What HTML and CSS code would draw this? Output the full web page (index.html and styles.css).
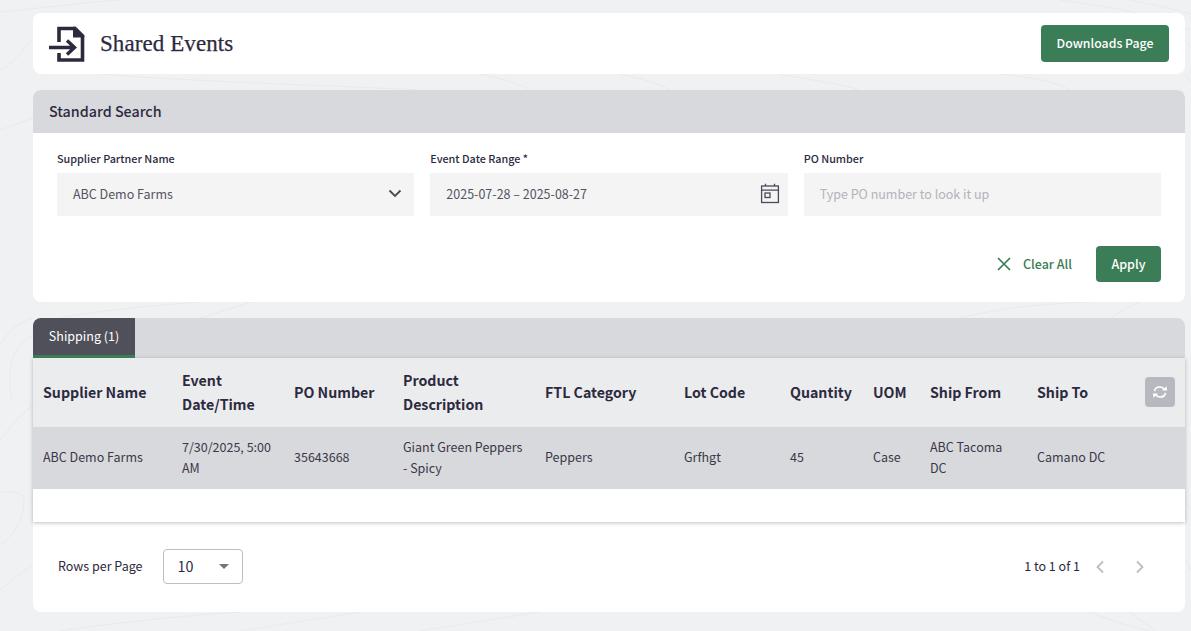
FILE: index.html
```html
<!DOCTYPE html>
<html lang="en">
<head>
<meta charset="utf-8">
<title>Shared Events</title>
<link rel="stylesheet" href="styles.css">
</head>
<body>
<svg class="contours" viewBox="0 0 1191 631" preserveAspectRatio="none" aria-hidden="true">
  <g fill="none" stroke="#e9eaed" stroke-width="1">
    <path d="M0 12C40 8 90 2 120 0M0 70C15 64 25 45 33 40M0 130C10 126 22 122 33 118"/>
    <path d="M0 345C12 325 25 320 33 318M12 400C6 370 12 345 33 335M0 440C12 425 20 415 33 405M0 545C14 535 24 520 24 500C22 490 10 492 0 492M0 590C12 580 22 572 33 565"/>
    <path d="M60 631C120 622 180 616 240 612M240 631C280 625 320 618 360 612M420 631C460 625 500 618 540 612"/>
    <path d="M1090 612C1120 625 1140 628 1150 631M1130 612C1140 620 1150 626 1155 631M1185 500C1188 505 1190 508 1191 510M1185 560C1188 565 1190 568 1191 570"/>
    <path d="M1060 0C1100 6 1140 10 1191 30M1130 0C1150 4 1170 8 1191 14M1185 40L1191 48M1185 74C1188 78 1190 80 1191 82"/>
    <path d="M100 74C200 82 300 84 420 90M480 74C500 78 520 84 530 90M620 74C640 78 660 84 670 90M780 74C800 78 840 84 860 90M1000 74C1040 78 1060 84 1070 90"/>
    <path d="M60 318C100 310 150 306 200 302M200 318C220 312 240 306 250 302M960 318C1000 308 1040 304 1090 302M1110 318C1120 312 1130 306 1140 302"/>
  </g>
</svg>
<main class="page">
  <header class="card title-card">
    <div class="title-group">
      <svg class="title-icon" viewBox="0 0 36 36" aria-hidden="true">
        <path d="M10 16V2.5H26L33.5 10V34H10V27" fill="none" stroke="#2d2a40" stroke-width="3.6"/>
        <path d="M24 .7V11.5H35.3V9.5L26.5 .7Z" fill="#2d2a40"/>
        <path d="M0 21.5H25M18 14.5L25.5 21.5L18 28.5" fill="none" stroke="#2d2a40" stroke-width="3.4"/>
      </svg>
      <h1 class="title">Shared Events</h1>
    </div>
    <button class="btn btn-downloads">Downloads Page</button>
  </header>

  <section class="card search-card">
    <h2 class="search-head">Standard Search</h2>
    <div class="fields">
      <div class="field">
        <label class="field-label">Supplier Partner Name</label>
        <div class="control">
          <span>ABC Demo Farms</span>
          <svg class="chevron" viewBox="0 0 14 9" aria-hidden="true"><path d="M1.5 1.5L7 7L12.5 1.5" fill="none" stroke="#4a4a55" stroke-width="1.8"/></svg>
        </div>
      </div>
      <div class="field">
        <label class="field-label">Event Date Range *</label>
        <div class="control">
          <span>2025-07-28 – 2025-08-27</span>
          <svg class="calendar" viewBox="0 0 20 21" aria-hidden="true">
            <g fill="none" stroke="#4a4a58" stroke-width="1.3">
              <rect x="1.6" y="3" width="16.8" height="16.5"/>
              <path d="M1.6 7.2H18.4M5.5 .8V3M14.5 .8V3"/>
              <rect x="5" y="10" width="5" height="4.5"/>
            </g>
          </svg>
        </div>
      </div>
      <div class="field">
        <label class="field-label">PO Number</label>
        <div class="control placeholder"><span>Type PO number to look it up</span></div>
      </div>
    </div>
    <div class="search-actions">
      <button class="clear-btn">
        <svg class="clear-icon" viewBox="0 0 14 14" aria-hidden="true"><path d="M1 1L13 13M13 1L1 13" fill="none" stroke="#3b7d56" stroke-width="1.7"/></svg>
        <span class="clear-text">Clear All</span>
      </button>
      <button class="btn btn-apply">Apply</button>
    </div>
  </section>

  <section class="card results-card">
    <div class="tabs"><div class="tab">Shipping (1)</div></div>
    <div class="table-wrap">
      <table class="grid">
        <thead>
          <tr>
            <th class="c-supplier">Supplier Name</th>
            <th class="c-date">Event Date/Time</th>
            <th class="c-po">PO Number</th>
            <th class="c-desc">Product Description</th>
            <th class="c-cat">FTL Category</th>
            <th class="c-lot">Lot Code</th>
            <th class="c-qty">Quantity</th>
            <th class="c-uom">UOM</th>
            <th class="c-from">Ship From</th>
            <th class="c-to">Ship To</th>
            <th class="c-act">
              <button class="refresh" aria-label="Refresh">
                <svg viewBox="0 0 16 16" aria-hidden="true">
                  <g fill="none" stroke="#fff" stroke-width="1.7">
                    <path d="M2.5 7C3 4.5 5.2 3 7.8 3C9.8 3 11.4 4 12.4 5.6"/>
                    <path d="M13.5 9C13 11.5 10.8 13 8.2 13C6.2 13 4.6 12 3.6 10.4"/>
                  </g>
                  <path d="M10 6.6L15.2 6.6L14.4 2.2Z M6 9.4L.8 9.4L1.6 13.8Z" fill="#fff"/>
                </svg>
              </button>
            </th>
          </tr>
        </thead>
        <tbody>
          <tr>
            <td>ABC Demo Farms</td>
            <td>7/30/2025, 5:00 AM</td>
            <td>35643668</td>
            <td>Giant Green Peppers - Spicy</td>
            <td>Peppers</td>
            <td>Grfhgt</td>
            <td>45</td>
            <td>Case</td>
            <td>ABC Tacoma DC</td>
            <td>Camano DC</td>
            <td></td>
          </tr>
        </tbody>
      </table>
      <div class="table-space"></div>
    </div>
    <footer class="pager">
      <div class="rows">
        <span>Rows per Page</span>
        <div class="rows-select"><span>10</span><i class="caret"></i></div>
      </div>
      <div class="page-info">
        <span>1 to 1 of 1</span>
        <svg class="page-arrow" viewBox="0 0 10 14" aria-hidden="true"><path d="M8 1.5L2.5 7L8 12.5" fill="none" stroke="#bcbec6" stroke-width="1.8"/></svg>
        <svg class="page-arrow" viewBox="0 0 10 14" aria-hidden="true"><path d="M2 1.5L7.5 7L2 12.5" fill="none" stroke="#bcbec6" stroke-width="1.8"/></svg>
      </div>
    </footer>
  </section>
</main>
</body>
</html>
```

FILE: styles.css
```css
* { box-sizing: border-box; }
html, body { height: 100%; }
body {
  margin: 0;
  background: #f0f1f3;
  color: #2d2a40;
  font-family: "Noto Sans CJK SC", "Source Sans Pro", "Noto Sans", sans-serif;
  font-size: 12.5px;
  overflow: hidden;
  position: relative;
}
.contours { position: absolute; inset: 0; width: 100%; height: 100%; pointer-events: none; }
.page {
  position: relative;
  padding: 13px 6px 0 33px;
  display: flex;
  flex-direction: column;
  gap: 16px;
}
.card { background: #fff; border-radius: 8px; }
button { font-family: inherit; cursor: pointer; }

.title-card {
  height: 61px;
  display: flex;
  align-items: center;
  justify-content: space-between;
  padding: 0 16px;
}
.title-group { display: flex; align-items: center; gap: 15px; }
.title-icon { width: 36px; height: 36px; display: block; }
.title {
  margin: 0;
  font-family: "Liberation Serif", serif;
  font-weight: 400;
  font-size: 23px;
  letter-spacing: .08px;
  color: #2d2a40;
  -webkit-text-stroke: .25px #2d2a40;
}
.btn {
  border: 0;
  border-radius: 4px;
  background: #3b7d56;
  color: #fff;
  font-size: 12.5px;
  font-weight: 500;
  line-height: 18px;
  padding: 0;
}
.btn-downloads { width: 128px; height: 37px; padding-bottom: 2px; font-size: 12.3px; }
.btn-apply { width: 65px; height: 36px; }

.search-card { height: 212px; }
.search-head {
  margin: 0;
  height: 43px;
  padding: 0 16px 2px;
  display: flex;
  align-items: center;
  background: #d8d9dd;
  border-radius: 8px 8px 0 0;
  font-size: 14.3px;
  font-weight: 500;
}
.fields {
  display: grid;
  grid-template-columns: repeat(3, 1fr);
  gap: 16px;
  padding: 17px 24px 0;
}
.field { display: flex; flex-direction: column; gap: 7px; }
.field-label { font-size: 10.8px; font-weight: 500; line-height: 16px; }
.control {
  height: 43px;
  padding: 0 16px 2px;
  background: #f4f4f4;
  display: flex;
  align-items: center;
  justify-content: space-between;
  font-size: 12.5px;
  color: #55535f;
}
.placeholder { color: #b3b3b8; }
.chevron { width: 14px; height: 9px; margin-right: -4px; }
.calendar { width: 20px; height: 21px; margin-right: -8px; }
.search-actions {
  display: flex;
  justify-content: flex-end;
  align-items: center;
  gap: 24px;
  padding: 30px 24px 0;
}
.clear-btn {
  display: flex;
  align-items: center;
  gap: 12px;
  border: 0;
  padding: 0;
  background: none;
  color: #3b7d56;
  font-size: 12.5px;
  font-weight: 500;
}
.clear-text { padding-bottom: 2px; }
.clear-icon { width: 14px; height: 14px; }

.results-card { height: 294px; }
.tabs {
  height: 40px;
  background: #d8d9dd;
  border-radius: 8px 8px 0 0;
  display: flex;
}
.tab {
  width: 102px;
  height: 40px;
  padding-top: 8px;
  text-align: center;
  background: #50505a;
  color: #fff;
  font-size: 12.5px;
  line-height: 20px;
  border-bottom: 3px solid #3b7d56;
  border-top-left-radius: 8px;
}
.table-wrap { box-shadow: 0 1px 4px rgba(0, 0, 0, .25); }
.grid { width: 100%; table-layout: fixed; border-collapse: collapse; }
.grid th, .grid td { padding: 0 10px; text-align: left; vertical-align: middle; }
.grid th {
  height: 69px;
  padding-bottom: 2px;
  background: #ebecee;
  font-size: 14.2px;
  line-height: 24px;
  font-weight: 700;
}
.grid td {
  height: 62px;
  padding-bottom: 3px;
  background: #d8d9dd;
  font-size: 12.5px;
  line-height: 21px;
  color: #3a3848;
}
.c-supplier { width: 139px; }
.c-date { width: 112px; }
.c-po { width: 109px; }
.c-desc { width: 142px; }
.c-cat { width: 139px; }
.c-lot { width: 106px; }
.c-qty { width: 83px; }
.c-uom { width: 57px; }
.c-from { width: 107px; }
.c-to { width: 108px; }
.c-act { width: 50px; }
.refresh {
  width: 30px;
  height: 30px;
  padding: 7px;
  border: 0;
  border-radius: 4px;
  background: #b6b9c0;
  display: block;
}
.refresh svg { display: block; width: 16px; height: 16px; }
.table-space { height: 33px; background: #fff; }

.pager {
  height: 89px;
  padding: 0 40px 0 25px;
  display: flex;
  align-items: center;
  justify-content: space-between;
  font-size: 12.5px;
  color: #2d2a40;
}
.rows { display: flex; align-items: center; gap: 21px; }
.rows span { padding-bottom: 2px; }
.rows-select {
  width: 80px;
  height: 35px;
  padding: 0 13px;
  border: 1px solid #bdbdbd;
  border-radius: 4px;
  display: flex;
  align-items: center;
  justify-content: space-between;
  font-size: 14.3px;
}
.caret {
  width: 0;
  height: 0;
  border-left: 5.5px solid transparent;
  border-right: 5.5px solid transparent;
  border-top: 5px solid #757575;
}
.page-info { display: flex; align-items: center; gap: 30px; }
.page-info span { margin-right: -15px; padding-bottom: 2px; }
.page-arrow { width: 10px; height: 14px; display: block; }
```
